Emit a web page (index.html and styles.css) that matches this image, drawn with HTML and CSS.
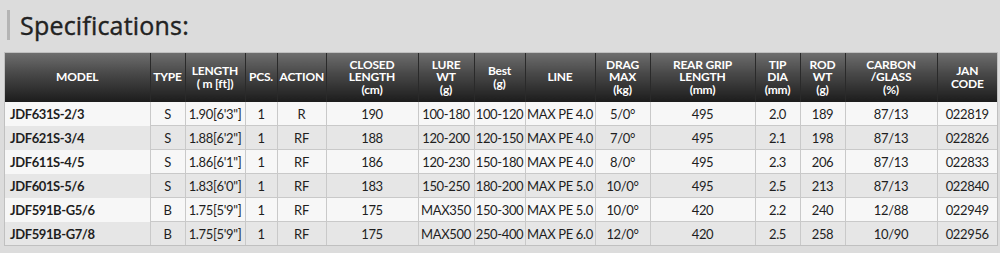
FILE: index.html
```html
<!DOCTYPE html>
<html>
<head>
<meta charset="utf-8">
<link rel="stylesheet" href="styles.css">
</head>
<body>
<div class="page">
  <h2 class="title">Specifications:</h2>
  <div class="frame">
  <table class="specs">
    <colgroup>
      <col style="width:145px"><col style="width:35px"><col style="width:60px"><col style="width:32px"><col style="width:49px">
      <col style="width:92px"><col style="width:56px"><col style="width:51px"><col style="width:70px"><col style="width:55px">
      <col style="width:105px"><col style="width:45px"><col style="width:45px"><col style="width:92px"><col style="width:60px">
    </colgroup>
    <thead>
      <tr>
        <th>MODEL</th><th>TYPE</th><th>LENGTH<br>( m [ft])</th><th>PCS.</th><th>ACTION</th>
        <th>CLOSED<br>LENGTH<br>(cm)</th><th>LURE<br>WT<br>(g)</th><th>Best<br>(g)</th><th>LINE</th><th>DRAG<br>MAX<br>(kg)</th>
        <th>REAR GRIP<br>LENGTH<br>(mm)</th><th>TIP<br>DIA<br>(mm)</th><th>ROD<br>WT<br>(g)</th><th>CARBON<br>/GLASS<br>(%)</th><th>JAN<br>CODE</th>
      </tr>
    </thead>
    <tbody>
      <tr><td class="model">JDF631S-2/3</td><td>S</td><td>1.90[6'3"]</td><td>1</td><td>R</td><td>190</td><td>100-180</td><td>100-120</td><td>MAX PE 4.0</td><td>5/0°</td><td>495</td><td>2.0</td><td>189</td><td>87/13</td><td>022819</td></tr>
      <tr><td class="model">JDF621S-3/4</td><td>S</td><td>1.88[6'2"]</td><td>1</td><td>RF</td><td>188</td><td>120-200</td><td>120-150</td><td>MAX PE 4.0</td><td>7/0°</td><td>495</td><td>2.1</td><td>198</td><td>87/13</td><td>022826</td></tr>
      <tr><td class="model">JDF611S-4/5</td><td>S</td><td>1.86[6'1"]</td><td>1</td><td>RF</td><td>186</td><td>120-230</td><td>150-180</td><td>MAX PE 4.0</td><td>8/0°</td><td>495</td><td>2.3</td><td>206</td><td>87/13</td><td>022833</td></tr>
      <tr><td class="model">JDF601S-5/6</td><td>S</td><td>1.83[6'0"]</td><td>1</td><td>RF</td><td>183</td><td>150-250</td><td>180-200</td><td>MAX PE 5.0</td><td>10/0°</td><td>495</td><td>2.5</td><td>213</td><td>87/13</td><td>022840</td></tr>
      <tr><td class="model">JDF591B-G5/6</td><td>B</td><td>1.75[5'9"]</td><td>1</td><td>RF</td><td>175</td><td>MAX350</td><td>150-300</td><td>MAX PE 5.0</td><td>10/0°</td><td>420</td><td>2.2</td><td>240</td><td>12/88</td><td>022949</td></tr>
      <tr><td class="model">JDF591B-G7/8</td><td>B</td><td>1.75[5'9"]</td><td>1</td><td>RF</td><td>175</td><td>MAX500</td><td>250-400</td><td>MAX PE 6.0</td><td>12/0°</td><td>420</td><td>2.5</td><td>258</td><td>10/90</td><td>022956</td></tr>
    </tbody>
  </table>
  </div>
</div>
</body>
</html>
```
FILE: styles.css
```css
html, body {
  margin: 0;
  padding: 0;
  background: #dcdcdc;
}
.page {
  padding: 10px 3px 0 4px;
}
.title {
  margin: 0 0 12px 3px;
  padding: 0 0 0 10px;
  border-left: 3px solid #b4b4b4;
  height: 30px;
  line-height: 30px;
  font-family: "Open Sans", "Noto Sans", sans-serif;
  font-weight: 500;
  font-size: 25px;
  color: #222222;
  letter-spacing: 0.2px;
  -webkit-text-stroke: 0.4px #222222;
}
.frame {
  border: 1px solid #c0c0c0;
  width: 992px;
}
.specs {
  border-collapse: collapse;
  table-layout: fixed;
  width: 992px;
  font-family: "Lato", "Noto Sans", sans-serif;
  font-size: 13px;
  color: #1e1e1e;
}
.specs th {
  height: 49px;
  padding: 0 2px;
  background: linear-gradient(to bottom, #6e6e6e 0%, #4a4a4a 40%, #1c1c1c 100%);
  color: #ffffff;
  font-weight: 700;
  font-size: 12px;
  line-height: 12.5px;
  letter-spacing: -0.2px;
  text-align: center;
  vertical-align: middle;
  border-right: 1px solid #2a2a2a;
  border-left: 1px solid #2a2a2a;
}
.specs th:first-child { border-left: none; }
.specs th:last-child { border-right: none; }
.specs td {
  height: 23px;
  padding: 0 1px;
  text-align: center;
  white-space: nowrap;
  border: 1px solid #c9c9c9;
  letter-spacing: -0.35px;
}
.specs td:first-child { border-left: none; }
.specs td:last-child { border-right: none; }
.specs tbody tr:nth-child(odd) td { background: #f7f7f7; }
.specs tbody tr:nth-child(even) td { background: #e6e6e6; }
.specs tbody tr:first-child td { border-top: none; }
.specs tbody tr:last-child td { border-bottom: none; }
.specs td.model {
  text-align: left;
  padding-left: 5px;
  font-weight: 700;
  font-size: 13px;
  letter-spacing: -0.4px;
  border-top-color: transparent;
  border-bottom-color: transparent;
}
```
